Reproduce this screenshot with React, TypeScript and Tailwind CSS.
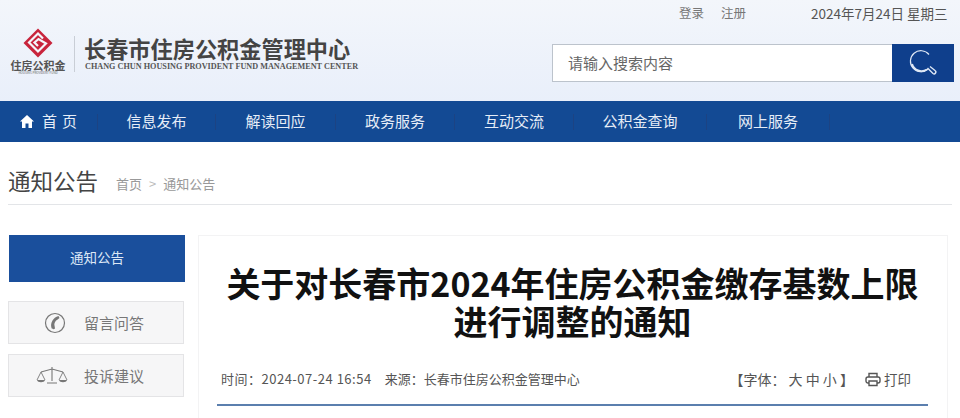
import React from 'react';

const NAV_ITEMS = [
  { label: '信息发布', width: 'w-[118px]' },
  { label: '解读回应', width: 'w-[120px]' },
  { label: '政务服务', width: 'w-[119px]' },
  { label: '互动交流', width: 'w-[119px]' },
  { label: '公积金查询', width: 'w-[133px]' },
  { label: '网上服务', width: 'w-[123px]' },
];

const Logo = () => (
  <svg width="30" height="30" viewBox="0 0 30 30" fill="none">
    <path d="M15 0.5 L29.5 15 L15 29.5 L0.5 15 Z" fill="#c8243c" />
    <path d="M20 10.5 L15 5.5 L6 14.5 L15 23.5 L23 15.5 L15.5 11 L11.5 14.5 L15 18" stroke="#f4f6fb" strokeWidth="2.2" fill="none" />
  </svg>
);

const HomeIcon = () => (
  <svg width="14" height="13" viewBox="0 0 14 13" fill="#fff">
    <path d="M7 0 L14 6.5 L12 6.5 V13 H8.5 V8.5 H5.5 V13 H2 V6.5 H0 Z" />
  </svg>
);

const SearchIcon = () => (
  <svg width="32" height="30" viewBox="0 0 32 30" fill="none" stroke="#dfe8f5">
    <path d="M22 6.5 A10.5 10.5 0 1 0 21 21" strokeWidth="1.2" />
    <path d="M5 16 A10 10 0 0 0 20 21.5" strokeWidth="2" />
    <path d="M20.5 20 L26 25.5 Q27.5 26.5 28.5 25 Q29.5 23.5 28 22.5 L23 18.5" strokeWidth="1.4" />
  </svg>
);

const PhoneIcon = () => (
  <svg width="22" height="22" viewBox="0 0 22 22" fill="none">
    <circle cx="11" cy="11" r="9.5" stroke="#777" strokeWidth="1.2" />
    <path d="M14.5 4 C9 5.5 6 11 7.5 16 C8 17.5 10 17.5 11 16.5 L10.5 13.5 C10 11.5 11.5 8.5 13 8 L15.5 6 Z" fill="#777" />
  </svg>
);

const ScaleIcon = () => (
  <svg width="32" height="20" viewBox="0 0 32 20" fill="none">
    <path d="M5 6 L16 3 L27 6 M16 1 V15 M11 17 H21" stroke="#777" strokeWidth="1.1" />
    <path d="M5 6 L1 14 M5 6 L9 14 M27 6 L23 14 M27 6 L31 14" stroke="#777" strokeWidth="0.9" />
    <path d="M1 14 H9 C8.5 17 1.5 17 1 14 Z M23 14 H31 C30.5 17 23.5 17 23 14 Z" fill="#777" />
  </svg>
);

const PrinterIcon = () => (
  <svg width="16" height="15" viewBox="0 0 16 15" fill="none" stroke="#555" strokeWidth="1.4">
    <path d="M4 5 V1.5 H12 V5" />
    <rect x="1" y="5" width="14" height="6" rx="2" />
    <path d="M4 9 H12 V13.5 H4 Z" fill="#fff" />
  </svg>
);

export default function App() {
  return (
    <div className="w-[960px] h-[418px] overflow-hidden bg-white font-['Noto_Sans_CJK_SC','Liberation_Sans',sans-serif]">
      {/* header */}
      <header className="h-[101px] bg-gradient-to-b from-[#f3f6fb] to-[#e9effa] flex justify-between">
        <div className="flex items-start pl-[10px] pt-[28px]">
          <div className="w-[56px] flex flex-col items-center">
            <Logo />
            <span className="text-[11px] leading-[12px] font-bold text-[#555] mt-[1px] whitespace-nowrap">住房公积金</span>
            <span className="text-[3px] leading-[5px] text-[#666] whitespace-nowrap">HOUSING PROVIDENT FUND</span>
          </div>
          <div className="w-px h-[36px] bg-[#c9ced6] ml-[8px] mt-[8px]" />
          <div className="ml-[9px] mt-[7px]">
            <div className="text-[22.2px] leading-[26px] font-bold text-[#444] whitespace-nowrap">长春市住房公积金管理中心</div>
            <div className="text-[8.2px] leading-[9px] font-bold text-[#555] font-['Liberation_Serif',serif] whitespace-nowrap mt-[1px] ml-[1px]">CHANG CHUN HOUSING PROVIDENT FUND MANAGEMENT CENTER</div>
          </div>
        </div>
        <div className="w-[408px] flex flex-col items-start">
          <div className="h-[44px] w-full flex items-start pt-[4px] leading-[18px] whitespace-nowrap">
            <span className="ml-[127px] text-[12.5px] text-[#777]">登录</span>
            <span className="ml-[17px] text-[12.5px] text-[#777]">注册</span>
            <span className="ml-[65px] text-[13.5px] text-[#555]">2024年7月24日 星期三</span>
          </div>
          <div className="w-[402px] h-[38px] flex border border-[#bcc3cc] bg-white">
            <div className="flex-1 pl-[15px] text-[15px] leading-[35px] text-[#666]">请输入搜索内容</div>
            <div className="w-[62px] -my-px -mr-px bg-[#0f3f8c] flex items-center justify-center">
              <SearchIcon />
            </div>
          </div>
        </div>
      </header>

      {/* nav */}
      <nav className="h-[41px] bg-[#134a94] flex items-center text-[15px] text-[#e6edf7] whitespace-nowrap">
        <div className="w-[98px] h-[16px] pl-[20px] flex items-center gap-[8px] border-r border-[#1c4383]">
          <HomeIcon />
          <span className="tracking-[5px]">首页</span>
        </div>
        {NAV_ITEMS.map((item) => (
          <div key={item.label} className={`${item.width} h-[16px] flex items-center justify-center border-r border-[#1c4383]`}>
            {item.label}
          </div>
        ))}
      </nav>

      {/* page title */}
      <div className="mx-[8px] h-[63px] border-b border-[#e3e5e8] flex items-start pt-[23px] whitespace-nowrap">
        <h1 className="text-[22.5px] leading-[30px] text-[#444]">通知公告</h1>
        <span className="ml-[18px] mt-[9px] text-[13px] leading-[20px] text-[#999]">首页</span>
        <span className="mx-[7px] mt-[9px] text-[13px] leading-[20px] text-[#bbb]">&gt;</span>
        <span className="mt-[9px] text-[13px] leading-[20px] text-[#999]">通知公告</span>
      </div>

      <div className="flex pl-[8px] pt-[30px]">
        {/* sidebar */}
        <aside className="w-[177px] flex flex-col">
          <div className="ml-[1px] w-[176px] h-[47px] pb-[2px] bg-[#1a4f9c] text-[13.5px] text-[#dce7f6] flex items-center justify-center">通知公告</div>
          <div className="mt-[19px] w-[176px] h-[43px] bg-[#f6f6f7] border border-[#e4e4e6] flex items-center text-[15px] text-[#777]">
            <span className="ml-[35px] w-[40px] flex"><PhoneIcon /></span>
            <span className="pt-[2px]">留言问答</span>
          </div>
          <div className="mt-[10px] w-[176px] h-[43px] bg-[#f6f6f7] border border-[#e4e4e6] flex items-center text-[15px] text-[#777]">
            <span className="ml-[27px] w-[48px] flex"><ScaleIcon /></span>
            <span className="pt-[2px]">投诉建议</span>
          </div>
        </aside>

        {/* article */}
        <main className="ml-[13px] w-[750px] h-[200px] border border-[#f3f3f4] pl-[18px] pr-[19px] pt-[28px]">
          <h2 className="text-[34px] leading-[38px] font-bold text-[#111] text-center whitespace-nowrap">
            关于对长春市2024年住房公积金缴存基数上限
            <br />
            进行调整的通知
          </h2>
          <div className="mt-[29px] h-[37px] flex items-start justify-between border-b-2 border-[#5b7fae] text-[13px] leading-[20px] text-[#555] whitespace-nowrap">
            <div className="pl-[4px]">
              <span className="tracking-[0.5px]">时间：2024-07-24 16:54</span>
              <span className="ml-[13px]">来源：长春市住房公积金管理中心</span>
            </div>
            <div className="flex items-center pr-[17px]">
              <span className="text-[14px]">【字体：&nbsp;大 中 小 】</span>
              <span className="ml-[11px] flex items-center gap-[3px] text-[13.5px]"><PrinterIcon />打印</span>
            </div>
          </div>
        </main>
      </div>
    </div>
  );
}
